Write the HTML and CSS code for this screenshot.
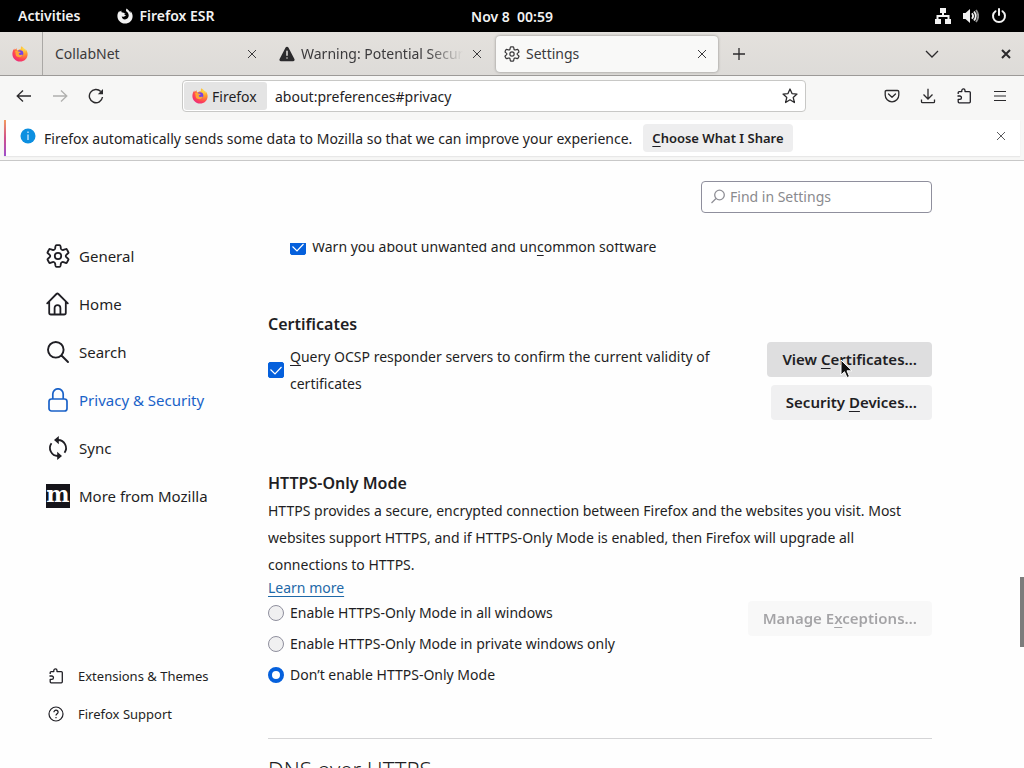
FILE: index.html
```html
<!DOCTYPE html>
<html lang="en">
<head>
    <meta charset="UTF-8">
    <meta name="viewport" content="width=device-width, initial-scale=1.0">
    <title>Settings</title>
    <link rel="stylesheet" href="styles.css">
</head>
<body>
    <!-- shared icons -->
    <svg class="sprite" aria-hidden="true">
        <defs>
            <radialGradient id="fire" cx="0.75" cy="0.15" r="0.95">
                <stop offset="0" stop-color="#ffe04a"/>
                <stop offset="0.4" stop-color="#ff9a2b"/>
                <stop offset="0.75" stop-color="#ff4452"/>
                <stop offset="1" stop-color="#e92a80"/>
            </radialGradient>
            <symbol id="firefox" viewBox="0 0 16 16">
                <path fill="url(#fire)" d="M15.3 6.2C15 4.9 14 3.6 13.2 3.1c.5.8.7 1.6.8 2.1C12.9 2.600 11 1.900 9.600.3c-.9 1-.9 2.100-.7 3-1.300 0-2.500.5-3.300 1.200C4.600 4 4.500 3 4.700 2.200 3.600 2.700 3 3.500 2.700 4c-.3-.3-.3-1-.2-1.500C1.200 3.700.4 5.800.4 8c0 4.200 3.400 7.600 7.600 7.600s7.600-3.200 7.600-7.400c0-.7-.1-1.400-.3-2z"/>
                <circle cx="8" cy="7.500" r="3.300" fill="#7542e5"/>
                <path fill="#ffa436" d="M3 5.200c1.200-.7 2.600-.5 3.500.4 1 .1 1.900.2 2.200.7-.2.700-1.600.8-1.900 1.300-.2.800.5 1.500 1.600 1.400 1-.1 1.800-.5 2.500.1-.8 1.600-2.400 2.300-4 2C4.700 11 3.700 9.700 3.700 8.200c0-1.200-.1-2-.7-3z"/>
            </symbol>
            <symbol id="gear" viewBox="0 0 24 24">
                <g fill="none" stroke="currentColor" stroke-width="1.800" stroke-linejoin="round">
                    <circle cx="12" cy="12" r="3.200"/>
                    <path d="M10.500 1.200h3c.6 0 .9.400 1 .9l.4 2.400c.3 1.200 1.400 1.800 2.500 1.400l2.300-.8c.5-.2 1 0 1.200.4l1.400 2.500c.3.500.2 1-.2 1.300l-1.700 1.400c-.9.700-.9 1.900 0 2.600l1.700 1.400c.4.300.5.800.2 1.300l-1.400 2.500c-.2.400-.7.600-1.200.4l-2.300-.8c-1.100-.4-2.200.2-2.500 1.400l-.4 2.400c-.1.500-.4.900-1 .9h-3c-.6 0-.9-.4-1-.9l-.4-2.400c-.3-1.200-1.400-1.800-2.500-1.400l-2.300.8c-.5.200-1 0-1.200-.4l-1.400-2.500c-.3-.5-.2-1 .2-1.300l1.700-1.400c.9-.7.9-1.900 0-2.600L1.900 9.300c-.4-.3-.5-.8-.2-1.300l1.400-2.500c.2-.4.7-.6 1.200-.4l2.300.8c1.100.4 2.200-.2 2.500-1.400l.4-2.400c.1-.5.400-.9 1-.9z"/>
                </g>
            </symbol>
            <symbol id="close" viewBox="0 0 10 10">
                <path d="M1 1l8 8M9 1L1 9" fill="none" stroke="currentColor"/>
            </symbol>
            <symbol id="puzzle" viewBox="0 0 16 16">
                <path fill="none" stroke="currentColor" stroke-width="1.300" stroke-linejoin="round" d="M2.200 6V4.600c0-.6.400-1 1-1h2.600V2.500a1.600 1.600 0 013.200 0v1.100h4.300c.6 0 1 .4 1 1v9.200c0 .6-.4 1-1 1H3.200c-.6 0-1-.4-1-1V11.300h1.600a1.500 1.500 0 000-3.300H1.500"/>
            </symbol>
        </defs>
    </svg>

    <header class="panel">
        <button class="panel-item">Activities</button>
        <button class="panel-item panel-app">
            <svg width="16" height="16" viewBox="0 0 16 16"><path fill="#f2f2f2" d="M15.300 6.200C15 4.900 14 3.600 13.200 3.100c.4.700.5 1.300.5 1.900C12.600 3 11 2 9.700.5c-.8 1-.8 1.900-.5 2.800 1.500.9 2.500 2.300 2.500 4.300 0 2.200-1.600 3.800-3.700 3.800S4.800 9.900 4.800 8.200c1 .8 2.200.7 2.900.1.500-.4 1-.3 1.100-.8-.2-.5-.8-.8-1.500-.7.200-.6.900-.8 1.300-1.200C7.600 5.400 7 5.300 6.600 4.700c-.6-.3-1.200-.4-1.700-.2-.6-.5-.7-1.300-.5-2C3.500 2.900 3 3.600 2.700 4.200c-.2-.4-.2-1 0-1.500C1.200 3.700.4 5.800.4 8c0 4.200 3.400 7.600 7.600 7.600s7.600-3.200 7.600-7.400c0-.7-.1-1.400-.3-2z"/></svg>
            Firefox ESR
        </button>
        <time class="clock">Nov 8&nbsp; 00:59</time>
        <div class="tray">
            <svg width="16" height="16" viewBox="0 0 16 16"><path fill="#f2f2f2" d="M5 0h6v5H9v2h5.500v4H16v5h-6v-5h2.500V9h-9v2H6v5H0v-5h1.500V7H7V5H5z"/></svg>
            <svg width="16" height="16" viewBox="0 0 16 16"><path fill="#f2f2f2" d="M0 5h2.500L7 1v14L2.500 11H0z"/><g fill="none" stroke="#f2f2f2" stroke-width="1.800"><path d="M9 5.300q2.200 2.700 0 5.400"/><path d="M11 3.500q3.600 4.500 0 9"/><path d="M13 2q4.400 6 0 12" opacity="0.600"/></g></svg>
            <svg width="16" height="16" viewBox="0 0 16 16"><path fill="none" stroke="#f2f2f2" stroke-width="2" stroke-linecap="round" d="M4.500 3.200a6 6 0 107 0M8 1v6"/></svg>
        </div>
    </header>

    <nav class="tabs">
        <button class="tab-pinned" aria-label="Firefox"><svg width="16" height="16"><use href="#firefox"/></svg></button>
        <div class="tab">
            <span class="tab-title">CollabNet</span>
            <button class="tab-close" aria-label="Close"><svg width="10" height="10"><use href="#close"/></svg></button>
        </div>
        <div class="tab">
            <svg width="16" height="16" viewBox="0 0 16 16"><path fill="#2b2a2c" d="M8 .8c.6 0 1.100.3 1.400.8l6 11.400c.6 1.100-.1 2.200-1.300 2.200H1.900C.7 15.200 0 14.100.6 13l6-11.400C6.900 1.100 7.400.8 8 .8z"/><path stroke="#e5e2de" stroke-width="1.500" stroke-linecap="round" d="M8 5.200v4M8 12v.1"/></svg>
            <span class="tab-title tab-fade">Warning: Potential Security Risk</span>
            <button class="tab-close" aria-label="Close"><svg width="10" height="10"><use href="#close"/></svg></button>
        </div>
        <div class="tab tab-selected">
            <svg width="16" height="16"><use href="#gear"/></svg>
            <span class="tab-title">Settings</span>
            <button class="tab-close" aria-label="Close"><svg width="10" height="10"><use href="#close"/></svg></button>
        </div>
        <button class="tool" aria-label="New tab"><svg width="14" height="14" viewBox="0 0 14 14"><path d="M7 1v12M1 7h12" stroke="#2b2a2c" stroke-width="1.300"/></svg></button>
        <div class="tabs-end">
            <button class="tool" aria-label="List tabs"><svg width="14" height="8" viewBox="0 0 14 8"><path d="M1 1l6 6 6-6" fill="none" stroke="#2b2a2c" stroke-width="1.300"/></svg></button>
            <button class="tool" aria-label="Close window"><svg width="10" height="10" viewBox="0 0 10 10"><path d="M1 1l8 8M9 1L1 9" stroke="#2b2a2c" stroke-width="2"/></svg></button>
        </div>
    </nav>

    <div class="toolbar">
        <button class="tool" aria-label="Back"><svg width="16" height="16" viewBox="0 0 16 16"><path d="M15 8H1.500M7 2.500L1.200 8 7 13.500" fill="none" stroke="#2b2a2c" stroke-width="1.300"/></svg></button>
        <button class="tool" aria-label="Forward" disabled><svg width="16" height="16" viewBox="0 0 16 16"><path d="M1 8h13.500M9 2.500L14.800 8 9 13.500" fill="none" stroke="#b0b0ae" stroke-width="1.300"/></svg></button>
        <button class="tool" aria-label="Reload"><svg width="16" height="16" viewBox="0 0 16 16"><path d="M14.500 9A6.600 6.600 0 1112.800 3.600" fill="none" stroke="#2b2a2c" stroke-width="1.400"/><path d="M15 1v5.200H9.800z" fill="#2b2a2c"/></svg></button>
        <div class="urlbar">
            <button class="identity"><svg width="16" height="16"><use href="#firefox"/></svg>Firefox</button>
            <input class="url" type="text" value="about:preferences#privacy" aria-label="Address">
            <button class="star" aria-label="Bookmark"><svg width="16" height="16" viewBox="0 0 16 16"><path d="M8 1l2 4.600 5 .5-3.800 3.300L12.400 14.500 8 11.800l-4.400 2.700 1.200-5.100L1 6.100l5-.5z" fill="none" stroke="#2b2a2c" stroke-width="1.300" stroke-linejoin="round"/></svg></button>
        </div>
        <button class="tool" aria-label="Pocket"><svg width="16" height="16" viewBox="0 0 16 16"><g fill="none" stroke="#2b2a2c" stroke-width="1.300" stroke-linejoin="round"><path d="M2.500 2.500h11c.7 0 1.300.5 1.300 1.200V7A6.800 6.800 0 011.200 7V3.700c0-.7.6-1.200 1.300-1.200z"/><path d="M4.500 6L8 9.200 11.500 6" stroke-linecap="round"/></g></svg></button>
        <button class="tool" aria-label="Downloads"><svg width="16" height="16" viewBox="0 0 16 16"><path d="M8 .8v10M3.500 6.500L8 11l4.500-4.500M1.500 11.500v2.200c0 .6.500 1 1 1h11c.6 0 1-.4 1-1v-2.200" fill="none" stroke="#2b2a2c" stroke-width="1.300"/></svg></button>
        <button class="tool" aria-label="Extensions"><svg width="16" height="16"><use href="#puzzle"/></svg></button>
        <button class="tool" aria-label="Menu"><svg width="14" height="12" viewBox="0 0 14 12"><path d="M1 1.500h12M1 6h12M1 10.500h12" stroke="#2b2a2c" stroke-width="1.200"/></svg></button>
    </div>

    <div class="notice-area">
        <div class="notice">
            <svg class="notice-icon" width="16" height="16" viewBox="0 0 16 16"><circle cx="8" cy="8" r="7.500" fill="#0c8fe0"/><path d="M8 3.500v1.500M8 6.500v5.500" stroke="#cfeaff" stroke-width="1.300"/></svg>
            <span class="notice-text">Firefox automatically sends some data to Mozilla so that we can improve your experience.</span>
            <button class="notice-button"><u>C</u>hoose What I Share</button>
            <button class="notice-icon notice-close" aria-label="Close"><svg width="10" height="10"><use href="#close"/></svg></button>
        </div>
    </div>

    <div class="page">
        <aside class="sidebar">
            <nav class="categories">
                <a class="category" href="#general"><svg width="24" height="24"><use href="#gear"/></svg>General</a>
                <a class="category" href="#home"><svg width="24" height="24" viewBox="0 0 24 24"><g fill="none" stroke="currentColor" stroke-width="1.800" stroke-linecap="round" stroke-linejoin="round"><path d="M1.200 11.300L10.400 2q1-.9 2 0l9.400 9.300M3.200 10v10.700c0 1 .8 1.800 1.800 1.800h13c1 0 1.800-.8 1.800-1.800V10"/><path d="M8.600 22v-6c0-1.700 1.200-2.900 2.900-2.900s2.900 1.200 2.900 2.900v6"/></g></svg>Home</a>
                <a class="category" href="#search"><svg width="24" height="24" viewBox="0 0 24 24"><g fill="none" stroke="currentColor" stroke-width="1.900" stroke-linecap="round"><circle cx="9.800" cy="9.800" r="7.800"/><path d="M15.500 15.500L22 22"/></g></svg>Search</a>
                <a class="category category-selected" href="#privacy"><svg width="24" height="24" viewBox="0 0 24 24"><g fill="none" stroke="currentColor" stroke-width="1.700"><rect x="3" y="11" width="18" height="12" rx="2.500"/><path d="M6.800 11V6a5.200 5.200 0 0110.400 0v5"/></g></svg>Privacy &amp; Security</a>
                <a class="category" href="#sync"><svg width="24" height="24" viewBox="0 0 24 24"><g fill="none" stroke="currentColor" stroke-width="1.800"><path d="M11 4h1a8 8 0 016.500 12.700"/><path d="M13 20h-1A8 8 0 015.500 7.300"/></g><path fill="currentColor" d="M12.800 0v8.200L8 4.100zM11.200 15.800V24l4.800-4.100z"/></svg>Sync</a>
                <a class="category" href="#more"><svg width="24" height="24" viewBox="0 0 24 24"><path fill="#15141a" d="M0 0h24v24H0z"/><text class="mozilla-m" x="12" y="18" text-anchor="middle">m</text></svg>More from Mozilla</a>
            </nav>
            <div class="help">
                <a class="help-link" href="#addons"><svg width="16" height="16"><use href="#puzzle"/></svg>Extensions &amp; Themes</a>
                <a class="help-link" href="#support"><svg width="16" height="16" viewBox="0 0 16 16"><g fill="none" stroke="currentColor" stroke-width="1.200"><circle cx="8" cy="8" r="7"/><path d="M5.900 6.300a2.100 2.100 0 114.200 0c0 1.400-2.100 1.500-2.100 3.100M8 11v1.200"/></g></svg>Firefox Support</a>
            </div>
        </aside>

        <main class="main">
            <div class="search-row">
                <label class="search">
                    <svg width="16" height="16" viewBox="0 0 16 16"><g fill="none" stroke="#8f8f96" stroke-width="1.300"><circle cx="9.500" cy="6" r="4.800"/><path d="M6 9.500L1.500 14"/></g></svg>
                    <input type="text" placeholder="Find in Settings">
                </label>
            </div>

            <div class="scroller">
                <label class="option option-nested"><input type="checkbox" checked><span>Warn you about unwanted and un<u>c</u>ommon software</span></label>

                <section class="group">
                    <h2>Certificates</h2>
                    <div class="row row-certs">
                        <label class="option"><input type="checkbox" checked><span><u>Q</u>uery OCSP responder servers to confirm the current validity of certificates</span></label>
                        <div class="actions">
                            <button class="btn btn-hover">View <u>C</u>ertificates…</button>
                            <button class="btn">Security <u>D</u>evices…</button>
                        </div>
                    </div>
                </section>

                <section class="group">
                    <h2>HTTPS-Only Mode</h2>
                    <p>HTTPS provides a secure, encrypted connection between Firefox and the websites you visit. Most websites support HTTPS, and if HTTPS-Only Mode is enabled, then Firefox will upgrade all connections to HTTPS.</p>
                    <a class="learn" href="#learn">Learn more</a>
                    <div class="row">
                        <div class="radios">
                            <label class="option"><input type="radio" name="https"><span>Enable HTTPS-Only Mode in all windows</span></label>
                            <label class="option"><input type="radio" name="https"><span>Enable HTTPS-Only Mode in private windows only</span></label>
                            <label class="option"><input type="radio" name="https" checked><span>Don’t enable HTTPS-Only Mode</span></label>
                        </div>
                        <div class="actions">
                            <button class="btn" disabled>Manage E<u>x</u>ceptions…</button>
                        </div>
                    </div>
                </section>

                <section class="dns">
                    <h1>DNS over HTTPS</h1>
                </section>
            </div>
        </main>
        <div class="scroll-thumb"></div>
    </div>

    <svg class="pointer" width="14" height="20" viewBox="0 0 14 20"><path fill="#111" stroke="#fff" d="M1 1v15l3.500-3.300L7 18.500l2.500-1-2.500-5.700h5z"/></svg>
</body>
</html>
```
FILE: styles.css
```css
* {
    margin: 0;
    padding: 0;
    box-sizing: border-box;
}

body {
    display: flex;
    flex-direction: column;
    height: 100vh;
    overflow: hidden;
    font-family: "Noto Sans", "Open Sans", sans-serif;
    font-size: 14px;
    color: #1f1e24;
    background: #fefefe;
}

button,
input {
    font: inherit;
    color: inherit;
    border: none;
    background: none;
}

svg {
    display: block;
    flex-shrink: 0;
}

u {
    text-underline-offset: 3px;
}

.sprite {
    position: absolute;
    width: 0;
    height: 0;
}

/* desktop panel */
.panel {
    display: grid;
    grid-template-columns: auto auto 1fr auto;
    align-items: center;
    position: relative;
    height: 32px;
    flex-shrink: 0;
    padding: 0 17px 1px 18px;
    background: #000;
    color: #f2f2f2;
    font-weight: 600;
}

.panel-app {
    display: flex;
    align-items: center;
    gap: 6px;
    margin-left: 37px;
}

.clock {
    position: absolute;
    left: 50%;
    transform: translateX(-50%);
}

.tray {
    display: flex;
    gap: 12px;
    grid-column: 4;
}

/* tab strip */
.tabs {
    display: flex;
    align-items: center;
    height: 44px;
    flex-shrink: 0;
    background: linear-gradient(#e4e1dd, #dddbd8);
    border-bottom: 1px solid #9c9a98;
    color: #3b3a3c;
}

.tab-pinned {
    display: flex;
    align-items: center;
    justify-content: center;
    width: 43px;
    height: 100%;
    padding-right: 3px;
    border-right: 1px solid #aaa8a5;
}

.tab {
    display: flex;
    align-items: center;
    gap: 6px;
    width: 222px;
    height: 36px;
    margin-left: 3px;
    padding: 0 8px;
    border-radius: 4px;
}

.tab-title {
    flex: 1;
    overflow: hidden;
    white-space: nowrap;
}

.tab-title:first-child {
    padding-left: 1px;
}

.tab-fade {
    -webkit-mask-image: linear-gradient(to left, transparent, #000 36px);
    mask-image: linear-gradient(to left, transparent, #000 36px);
}

.tab-close {
    padding: 3px;
}

.tab-selected {
    background: #f9f9f8;
    box-shadow: 0 0 3px #8a8886;
}

.tool {
    display: flex;
    align-items: center;
    justify-content: center;
    width: 36px;
    height: 32px;
}

.tabs > .tool {
    margin-left: 3px;
}

.tabs-end {
    display: flex;
    gap: 38px;
    margin-left: auto;
}

/* navigation toolbar */
.toolbar {
    display: flex;
    align-items: center;
    height: 44px;
    flex-shrink: 0;
    padding: 0 6px 4px;
    background: #f7f7f6;
}

.urlbar {
    display: flex;
    align-items: center;
    flex: 1;
    height: 32px;
    margin: 0 68px;
    padding: 1px;
    border: 1px solid #c8c8c6;
    border-radius: 4px;
    background: #fff;
}

.identity {
    display: flex;
    align-items: center;
    gap: 4px;
    min-width: 83px;
    height: 28px;
    padding: 0 8px;
    border-radius: 3px;
    background: #e4e4e4;
}

.url {
    flex: 1;
    min-width: 0;
    padding: 0 8px;
}

.star {
    padding: 6px;
}

/* data notice */
.notice-area {
    flex-shrink: 0;
    padding: 0 4px 4px;
    background: #f7f7f6;
    border-bottom: 1px solid #c8c8c8;
}

.notice {
    display: flex;
    align-items: center;
    height: 36px;
    padding: 0 14px;
    border-left: 2px solid;
    border-image: linear-gradient(#f5a05c, #d0508c, #9a4fd0) 1;
    background: #fff;
    box-shadow: 0 1px 1px #e8e8e8;
}

.notice-icon {
    margin-bottom: 4px;
}

.notice-text {
    margin-left: 8px;
}

.notice-button {
    height: 28px;
    margin-left: 11px;
    padding: 0 9px;
    border-radius: 4px;
    background: #eeeeef;
    font-size: 13px;
    font-weight: 600;
}

.notice-close {
    margin-left: auto;
    color: #5b5b5e;
}

/* settings page */
.page {
    display: flex;
    flex: 1;
    min-height: 0;
    position: relative;
}

.sidebar {
    display: flex;
    flex-direction: column;
    justify-content: space-between;
    width: 268px;
    flex-shrink: 0;
    padding: 71px 0 35px 46px;
}

.category {
    display: flex;
    align-items: center;
    gap: 9px;
    height: 48px;
    font-size: 15px;
    color: inherit;
    text-decoration: none;
}

.category-selected {
    color: #1a62c8;
}

.mozilla-m {
    font-family: "DejaVu Serif", serif;
    font-size: 22px;
    font-weight: 700;
    fill: #fff;
}

.help-link {
    display: flex;
    align-items: center;
    gap: 14px;
    height: 38px;
    padding-left: 2px;
    font-size: 13px;
    color: inherit;
    text-decoration: none;
}

.main {
    display: flex;
    flex-direction: column;
    flex: 1;
    max-width: 664px;
    min-width: 0;
}

.search-row {
    display: flex;
    justify-content: flex-end;
    padding: 20px 0 30px;
}

.search {
    display: flex;
    align-items: center;
    gap: 4px;
    width: 231px;
    height: 32px;
    padding: 0 8px 1px;
    border: 1px solid #8f8f9d;
    border-radius: 4px;
    background: #fff;
}

.search input {
    flex: 1;
    min-width: 0;
}

.search input::placeholder {
    color: #8a8a8e;
    opacity: 1;
}

.scroller {
    flex: 1;
    min-height: 0;
    overflow: hidden;
    line-height: 27px;
}

.option {
    display: flex;
    align-items: center;
    gap: 6px;
}

/* scrolled partly out of view */
.option-nested {
    margin: -10px 0 50px;
    padding-left: 22px;
}

.option input {
    appearance: none;
    width: 16px;
    height: 16px;
    flex-shrink: 0;
    border: 1px solid #8f8f9d;
    background: #f0f0f1;
}

.option input[type="checkbox"] {
    border-radius: 2px;
}

.option input[type="checkbox"]:checked {
    border-color: #0560dc;
    background: #0560dc url("data:image/svg+xml,%3Csvg xmlns='http://www.w3.org/2000/svg' viewBox='0 0 14 14'%3E%3Cpath d='M1.500 6.500L6 11l6.500-7' fill='none' stroke='white' stroke-width='1.200'/%3E%3C/svg%3E") center / 14px 14px;
}

.option input[type="radio"] {
    border-radius: 50%;
}

.option input[type="radio"]:checked {
    border: 4px solid #0560dc;
    background: #fff;
}

.group {
    margin-top: 49px;
}

h2 {
    font-size: 16px;
    font-weight: 600;
    line-height: 28px;
}

.row {
    display: flex;
    justify-content: space-between;
    gap: 16px;
}

.row-certs {
    margin-top: 4px;
}

.row-certs .option {
    flex: 1;
    align-self: flex-start;
    padding-top: 1px;
}

.actions {
    display: flex;
    flex-direction: column;
    align-items: flex-end;
    gap: 8px;
    flex-shrink: 0;
}

.radios {
    margin: -1px 0 1px;
}

.radios .option {
    height: 31px;
}

.radios + .actions {
    padding-top: 3px;
}

.btn {
    height: 35px;
    padding: 0 15px;
    border-radius: 4px;
    background: #f0f0f1;
    font-size: 15px;
    font-weight: 600;
}

.btn-hover {
    background: #dededf;
}

.btn:disabled {
    opacity: 0.4;
}

.learn {
    display: block;
    width: fit-content;
    line-height: 20px;
    color: #1f69a8;
    text-underline-offset: 3px;
}

.dns {
    margin-top: 47px;
    padding-top: 14px;
    border-top: 1px solid #d4d4d6;
}

h1 {
    font-size: 22px;
    font-weight: 300;
    line-height: 33px;
}

.scroll-thumb {
    position: absolute;
    top: 416px;
    right: 0;
    width: 4px;
    height: 70px;
    background: #7c7c7c;
}

.pointer {
    position: absolute;
    left: 840px;
    top: 359px;
}
```
